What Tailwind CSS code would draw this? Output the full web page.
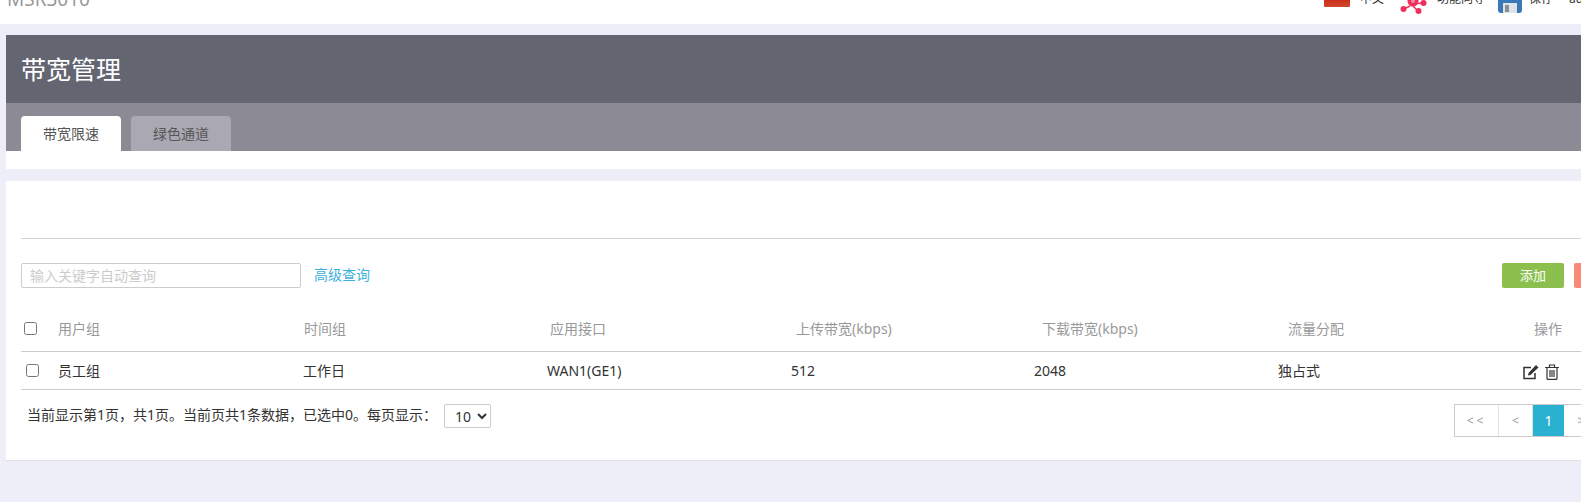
<!DOCTYPE html>
<html lang="zh-CN">
  <head>
    <meta charset="UTF-8" />
    <title>带宽管理</title>
    <script src="https://cdn.jsdelivr.net/npm/@tailwindcss/browser@4"></script>
  </head>
  <body class="h-[502px] w-[1581px] overflow-hidden bg-[#eeeef8] font-['Noto_Sans','Noto_Sans_CJK_SC',sans-serif] text-[14px] text-[#333]">
    <!-- top bar, cut off by the window -->
    <header class="relative h-[24px] overflow-hidden bg-white">
      <div class="absolute top-[-15px] left-[7px] text-[19px] leading-[28px] text-[#999]">MSR3010</div>
      <div class="absolute top-0 left-[1324px] h-[7px] w-[26px] rounded-b-[1px] bg-gradient-to-b from-[#c9301c] to-[#d2452c]"></div>
      <div class="absolute top-[-10px] left-[1360px] text-[12px] leading-[18px] text-[#333]">中文</div>
      <svg class="absolute top-0 left-[1400px]" width="28" height="15" viewBox="0 0 28 15">
        <path d="M10 6 L4 9 M12 4 L23 3 M13 6 L18 11" stroke="#f0305c" stroke-width="1.5" fill="none" />
        <circle cx="3.5" cy="9" r="3" fill="#f0305c" />
        <circle cx="23.5" cy="3" r="3" fill="#f0305c" />
        <circle cx="18.5" cy="11" r="3" fill="#f0305c" />
        <circle cx="13" cy="1" r="5.5" fill="#f0305c" />
        <circle cx="13" cy="1" r="2" fill="#f58aa2" />
      </svg>
      <div class="absolute top-[-10px] left-[1437px] text-[12px] leading-[18px] text-[#333]">功能向导</div>
      <svg class="absolute top-0 left-[1498px]" width="24" height="13" viewBox="0 0 24 13">
        <path d="M0 0 H24 V10 Q24 13 21 13 H3 Q0 13 0 10 Z" fill="#3b78b8" />
        <rect x="5" y="3" width="14" height="10" fill="#dfe3e8" />
        <rect x="7" y="5" width="4" height="7" fill="#8a8f96" />
      </svg>
      <div class="absolute top-[-10px] left-[1529px] text-[12px] leading-[18px] text-[#333]">保存</div>
      <div class="absolute top-[-10px] left-[1569px] text-[12px] leading-[18px] text-[#333]">admin</div>
    </header>

    <main class="ml-[6px] w-[1700px] pt-[11px]">
      <!-- title panel -->
      <section class="h-[134px] bg-white">
        <div class="flex h-[68px] items-center bg-[#636571] pt-[2px] pl-[15px] text-[25px] text-white">带宽管理</div>
        <div class="flex h-[48px] items-end gap-[10px] bg-[#8c8a94] pl-[15px]">
          <div class="flex h-[35px] w-[100px] items-center justify-center rounded-t-[4px] bg-white text-[#555]">带宽限速</div>
          <div class="flex h-[35px] w-[100px] items-center justify-center rounded-t-[4px] bg-[#aaa8b2] text-[#555]">绿色通道</div>
        </div>
      </section>

      <!-- list panel -->
      <section class="mt-[12px] h-[280px] border-b border-[#dddde6] bg-white pt-[57px] pl-[15px]">
        <div class="h-px bg-[#d4d4d4]"></div>

        <div class="mt-[24px] flex h-[25px] items-center">
          <input class="h-[25px] w-[280px] shrink-0 rounded-[2px] border border-[#ccc] px-2 text-[14px] placeholder:text-[#ccc]" placeholder="输入关键字自动查询" />
          <a class="mt-[-2px] ml-[13px] w-[56px] shrink-0 text-[#3eb1dc]">高级查询</a>
          <button class="ml-[1132px] h-[25px] w-[62px] shrink-0 rounded-[2px] bg-[#8bc04f] text-[13px] text-white">添加</button>
          <button class="ml-[10px] h-[25px] w-[62px] shrink-0 rounded-[2px] bg-[#f98a75] text-[13px] text-white">删除</button>
        </div>

        <!-- head row -->
        <div class="mt-[20px] grid h-[44px] grid-cols-[37px_246px_246px_246px_246px_246px_246px_60px] items-center border-b border-[#ccc] pb-[3px] text-[#999]">
          <input type="checkbox" class="ml-[3px] size-[13px]" />
          <div>用户组</div>
          <div>时间组</div>
          <div>应用接口</div>
          <div>上传带宽(kbps)</div>
          <div>下载带宽(kbps)</div>
          <div>流量分配</div>
          <div>操作</div>
        </div>

        <!-- data row -->
        <div class="grid h-[38px] grid-cols-[37px_245px_244px_244px_243px_244px_245px_60px] items-center border-b border-[#ccc] text-[#333]">
          <input type="checkbox" class="ml-[5px] size-[13px]" />
          <div>员工组</div>
          <div>工作日</div>
          <div>WAN1(GE1)</div>
          <div>512</div>
          <div>2048</div>
          <div>独占式</div>
          <div class="flex items-center gap-[6px] pt-[3px]">
            <svg width="16" height="16" viewBox="0 0 16 16" fill="none">
              <path d="M12 9 V14.5 H1 V3.5 H8" stroke="#333" stroke-width="1.5" />
              <path d="M5.5 9 L13 1 L15.5 3.5 L7.5 11 L5 11.5 Z" fill="#333" />
            </svg>
            <svg width="14" height="16" viewBox="0 0 14 16" fill="none" stroke="#333" stroke-width="1.2">
              <path d="M0 3.5 H14 M4.5 3.5 V1 H9.5 V3.5" />
              <path d="M2 3.5 V14.5 Q2 15.4 3 15.4 H11 Q12 15.4 12 14.5 V3.5" />
              <path d="M5 6 V13 M7 6 V13 M9 6 V13" />
            </svg>
          </div>
        </div>

        <!-- footer -->
        <div class="flex">
          <div class="mt-[14px] flex h-[24px] w-[1433px] shrink-0 items-center pl-[6px]">
            <span class="mt-[-3px]">当前显示第1页，共1页。当前页共1条数据，已选中0。每页显示：</span>
            <select class="ml-[7px] h-[24px] w-[47px] rounded-[2px] border border-[#ccc] bg-white pl-[6px] text-[14px]">
              <option>10</option>
            </select>
          </div>
          <div class="mt-[14px] flex h-[33px] shrink-0 border border-[#ccc] text-[#999]">
            <div class="flex w-[44px] items-center justify-center border-r border-[#e2e2e2] text-[12px] tracking-[3px]">&lt;&lt;</div>
            <div class="flex w-[34px] items-center justify-center border-r border-[#e2e2e2] text-[12px]">&lt;</div>
            <div class="flex w-[31px] items-center justify-center bg-[#2ab0d0] text-[14px] text-white">1</div>
            <div class="flex w-[34px] items-center justify-center text-[12px]">&gt;</div>
          </div>
        </div>
      </section>
    </main>
  </body>
</html>
